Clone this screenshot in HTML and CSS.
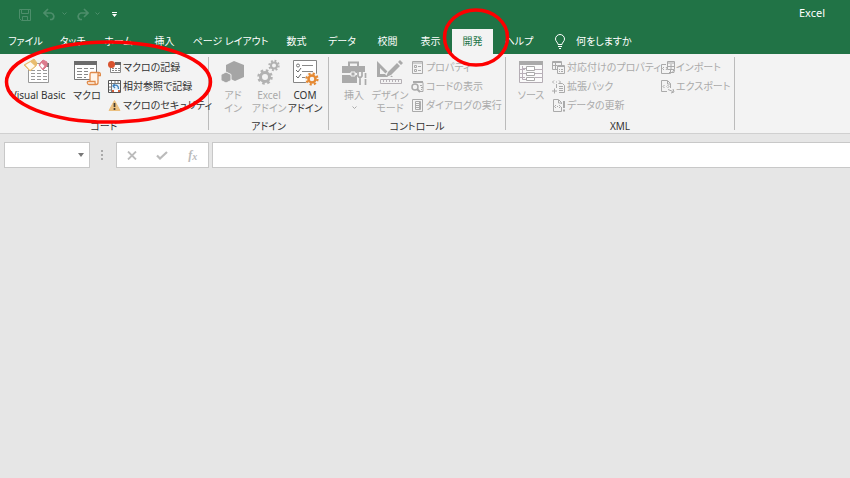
FILE: index.html
```html
<!DOCTYPE html>
<html lang="ja">
<head>
<meta charset="utf-8">
<meta name="viewport" content="width=device-width, initial-scale=1">
<title>Excel</title>
<link rel="stylesheet" href="styles.css">
</head>
<body>
<header class="titlebar">
  <div class="quick">
    <button class="quick-btn faded" aria-label="保存"><svg width="13" height="13" viewBox="0 0 13 13" fill="none" stroke="currentColor"><path d="M1.500 1.500h11v11h-9l-2-2zM3.500 1.500v4h7v-4M4.500 12.500v-4h5v4"/></svg></button>
    <button class="quick-btn faded" aria-label="元に戻す"><svg width="13" height="13" viewBox="0 0 13 13" fill="none" stroke="currentColor" stroke-width="1.700"><path d="M5 1 1 5l4 4M1 5h7a3.500 3.500 0 0 1 1 6.500H7"/></svg></button>
    <button class="quick-btn faded arrow" aria-label="元に戻すの一覧"><svg width="5" height="4" viewBox="0 0 5 4" fill="none" stroke="currentColor"><path d="m.5.5 2 2 2-2"/></svg></button>
    <button class="quick-btn faded" aria-label="やり直し"><svg width="13" height="13" viewBox="0 0 13 13" fill="none" stroke="currentColor" stroke-width="1.700"><path d="m8 1 4 4-4 4m4-4H5a3.500 3.500 0 0 0-1 6.500h2"/></svg></button>
    <button class="quick-btn faded arrow" aria-label="やり直しの一覧"><svg width="5" height="4" viewBox="0 0 5 4" fill="none" stroke="currentColor"><path d="m.5.5 2 2 2-2"/></svg></button>
    <button class="quick-btn custom" aria-label="クイック アクセスのカスタマイズ"><svg width="5" height="5" viewBox="0 0 5 5" fill="currentColor"><path d="M0 0h5v1H0zM0 2h5L2.500 5z"/></svg></button>
  </div>
  <span class="app-name">Excel</span>
</header>

<nav class="tabs">
  <button class="tab">ファイル</button>
  <button class="tab">タッチ</button>
  <button class="tab">ホーム</button>
  <button class="tab">挿入</button>
  <button class="tab">ページ レイアウト</button>
  <button class="tab">数式</button>
  <button class="tab">データ</button>
  <button class="tab">校閲</button>
  <button class="tab">表示</button>
  <button class="tab active">開発</button>
  <button class="tab">ヘルプ</button>
  <button class="tab tell"><svg width="10" height="15" viewBox="0 0 10 15" fill="none" stroke="currentColor"><path d="M3 10.500c0-2-2.500-3-2.500-5.500a4.500 4.500 0 0 1 9 0c0 2.500-2.500 3.500-2.500 5.500zM3 12.500h4M4 14.500h2"/></svg>何をしますか</button>
</nav>

<main class="ribbon">
  <section class="group code">
    <div class="tools">
      <button class="big wide">
        <svg width="28" height="28" viewBox="0 0 28 28"><path d="M4.500 5.500h20v19h-20z" fill="#fff" stroke="#999"/><path d="M17 5h8v4h-8z" fill="#737373"/><path d="M7 12.500h4m2 0h4m2 0h4M7 15.500h4m2 0h4m2 0h4M7 18.500h4m2 0h4m2 0h4M7 21.500h4m2 0h4m2 0h4" stroke="#999"/><path d="m7 3 3-2 3 4-1 3-6 5-6-6z" fill="#e9bd70" stroke="#e9bd70" stroke-linejoin="round"/><path d="m6.500 4 4.500 4-5 4-4.500-5z" fill="#fff9ee"/><path d="m17 4 2-2 4 2v4l-4 4-4-5z" fill="#dc7b8d" stroke="#dc7b8d" stroke-linejoin="round"/><path d="m17.500 5 3 3-2 2.500-2.500-3z" fill="#fff"/></svg>
        <span>Visual Basic</span>
      </button>
      <button class="big">
        <svg width="28" height="28" viewBox="0 0 28 28"><path d="M1.500 3.500h22v18h-22z" fill="#fff" stroke="#777"/><path d="M1 3h23v4H1z" fill="#6b6b6b"/><path d="M4 10.500h5m2 0h4m2 0h4M4 13.500h5m2 0h4M4 16.500h5m2 0h4M4 19.500h5m2 0h2" stroke="#888"/><path d="M18 14.500h8c1 0 1.500 1 1.500 3H25v7c0 2-1 2-2 2h-7c-2 0-2-3-1-3h2v-7q0-2 1-2zM17 23.500h5q0 3 1 3M25 17.500q0-3 1-3" fill="#fff5ea" stroke="#e08a4a" stroke-width="1.300"/></svg>
        <span>マクロ</span>
      </button>
      <div class="list">
        <button class="small"><svg width="14" height="14" viewBox="0 0 14 14"><path d="M2.500 2.500h10v9h-10z" fill="#fff" stroke="#888"/><path d="M7 1h6v3H7z" fill="#666"/><path d="M4 7.500h2m1 0h2m1 0h2M4 9.500h2m1 0h2m1 0h2" stroke="#888"/><circle cx="3.500" cy="3.500" r="3.500" fill="#d9532f"/></svg>マクロの記録</button>
        <button class="small"><svg width="14" height="14" viewBox="0 0 14 14"><path d="M.5.5h12v12H.5z" fill="#fff" stroke="#555"/><path d="M1 3.500h11M3.500 1v11M7 1v2M10 1v2M1 7h2M1 10h2" stroke="#777"/><path d="M4 4h8v6H4z" fill="#eaf3fb"/><path d="M6.500 4 5 6l2 2M5 6c3-1.500 5.500-1 5.500 3" fill="none" stroke="#3c80bd" stroke-width="1.300"/><path d="M4 10h2v2H4zM10 10h2v2h-2z" fill="#d45f3c"/></svg>相対参照で記録</button>
        <button class="small"><svg width="14" height="14" viewBox="0 0 14 14"><path d="M6.500 1.500 12 11.500H1z" fill="#ebc080" stroke="#ebc080" stroke-linejoin="round"/><path d="M6.500 4v4m0 1v2" stroke="#443c30" stroke-width="1.700"/></svg>マクロのセキュリティ</button>
      </div>
    </div>
    <h2 class="caption">コード</h2>
  </section>

  <section class="group addins">
    <div class="tools">
      <button class="big" disabled>
        <svg width="28" height="28" viewBox="0 0 28 28"><path d="m15 3 10 4v12l-9 4-9-4V7z" fill="#a5a5a5"/><path d="m7 14 5 2.500v6L7 25l-5-2.500v-6z" fill="#a5a5a5" stroke="#f3f3f3"/></svg>
        <span>アド<br>イン</span>
      </button>
      <button class="big" disabled>
        <svg width="28" height="28" viewBox="0 0 28 28" fill="none" stroke="#b2b2b2"><circle cx="10" cy="19" r="4.500" stroke-width="3"/><circle cx="10" cy="19" r="6.500" stroke-width="2.500" stroke-dasharray="2.550 2.555"/><circle cx="19" cy="7.500" r="3" stroke-width="2"/><circle cx="19" cy="7.500" r="4.700" stroke-width="2" stroke-dasharray="1.845 1.846"/></svg>
        <span>Excel<br>アドイン</span>
      </button>
      <button class="big">
        <svg width="28" height="28" viewBox="0 0 28 28"><path d="M2.500 2.500h23v22h-23z" fill="#fff" stroke="#858585"/><path d="M11 7.500h11M11 13.500h11M11 19.500h4" stroke="#888"/><path d="m5 12 2 2 3-4m-5 8 2 2 3-4" fill="none" stroke="#666"/><circle cx="7" cy="7.500" r="1.500" fill="none" stroke="#777"/><circle cx="21" cy="21" r="7" fill="#f3f3f3"/><g fill="none" stroke="#e58932"><circle cx="21" cy="21" r="3.500" stroke-width="2.500"/><circle cx="21" cy="21" r="5.500" stroke-width="2.200" stroke-dasharray="2.160 2.160"/></g></svg>
        <span>COM<br>アドイン</span>
      </button>
    </div>
    <h2 class="caption">アドイン</h2>
  </section>

  <section class="group controls">
    <div class="tools">
      <button class="big" disabled>
        <svg width="28" height="28" viewBox="0 0 28 28"><path d="M9 8V4.500h9V8" fill="none" stroke="#aaa" stroke-width="2"/><path d="M2 8h23v7H2zM2 17h15v8H2z" fill="#aaa"/><path d="M11 14h4v4h-4z" fill="#aaa" stroke="#f3f3f3"/><path d="M17 14h11v13H17z" fill="#f3f3f3"/><path d="M18 14v4q2 3 4 0v-4m-2 5v8M25.500 15v5m0 1v6" fill="none" stroke="#aaa" stroke-width="1.700"/></svg>
        <span>挿入<br><svg class="drop" width="5" height="4" viewBox="0 0 5 4" fill="none" stroke="currentColor"><path d="m.5.5 2 2 2-2"/></svg></span>
      </button>
      <button class="big" disabled>
        <svg width="28" height="28" viewBox="0 0 28 28"><path d="M1 3v16h16zM4 10l6 6H4z" fill="#aaa" fill-rule="evenodd"/><path d="m25 4-14 14" stroke="#f3f3f3" stroke-width="6"/><path d="m24 2 3 3-2 2-3-3zM21 5l3 3-9 9-5 2 2-5z" fill="#aaa"/><path d="M4.500 21.500h21v4h-21zM7.500 22v2m3-2v2m3-2v2m3-2v2m3-2v2m3-2v2" fill="none" stroke="#b5b0b5"/></svg>
        <span>デザイン<br>モード</span>
      </button>
      <div class="list">
        <button class="small" disabled><svg width="14" height="14" viewBox="0 0 14 14" fill="none" stroke="#aaa"><path d="M1.500.5h10v12h-10zM1 2h11M7 5.500h3M7 9.500h3"/><path d="M3.500 4.500h2v2h-2zM3.500 8.500h2v2h-2z"/></svg>プロパティ</button>
        <button class="small" disabled><svg width="14" height="14" viewBox="0 0 14 14" fill="none" stroke="#aaa"><path d="M2 2.500h10v9H8M2 1.500h10M9 5.500h2m-1 2h2m-2 2h1"/><circle cx="4" cy="7" r="3" stroke-width="1.500"/><path d="m6 9 3 3" stroke-width="2"/></svg>コードの表示</button>
        <button class="small" disabled><svg width="14" height="14" viewBox="0 0 14 14" fill="none" stroke="#aaa"><path d="M1.500.5h10v12h-10zM4.500 2.500h5v8h-5zM5 4.500h3m-3 2h3m-3 2h3"/><path d="M9 3v7" stroke-width="2"/></svg>ダイアログの実行</button>
      </div>
    </div>
    <h2 class="caption">コントロール</h2>
  </section>

  <section class="group xml">
    <div class="tools">
      <button class="big" disabled>
        <svg width="28" height="28" viewBox="0 0 28 28"><path d="M2.500 3.500h23v21h-23z" fill="#fafafa" stroke="#b4adb4"/><path d="M2 3h24v4H2z" fill="#aaa"/><path d="M3 11.500h5m10 0h8M3 15.500h5m10 0h8M3 19.500h5m10 0h8M5.500 8v13.500h4M5.500 10.500h4m-4 5h4" fill="none" stroke="#b9b0b9"/><path d="M9.500 8.500h8v4h-8zM9.500 14.500h8v3h-8zM9.500 19.500h8v3h-8z" fill="#fff" stroke="#aaa"/></svg>
        <span>ソース</span>
      </button>
      <div class="list">
        <button class="small" disabled><svg width="14" height="14" viewBox="0 0 14 14" fill="none" stroke="#aaa"><path d="M5 8.500H.5v-8h9V4M0 1.500h10M3.500 2v6M1 4.500h4"/><path d="M5.500 4.500h7v8h-7zM5 5.500h8M7 8.500h1m1 0h2m-4 2h1m1 0h2"/></svg>対応付けのプロパティ</button>
        <button class="small" disabled><svg width="14" height="14" viewBox="0 0 14 14" fill="none" stroke="#aaa"><path d="M4.500 8V4m2-.5h4l2 2v7H7M7 6.500h4m-4 2h4m-4 2h4M2.500 8.500v5M0 11h5M2 .5.5 2 2 3.500M7 .5 8.500 2 7 3.500M4 2h1"/></svg>拡張パック</button>
        <button class="small" disabled><svg width="14" height="14" viewBox="0 0 14 14" fill="none" stroke="#aaa"><path d="M9.500 8v4.500h-8V.5h5l3 3V5M6.500 1v3h3M4 6 2.500 7.500 4 9m3-3 1.500 1.500L7 9M5 7.500h1"/><path d="M12 2v7m0 1.500v2" stroke-width="2"/></svg>データの更新</button>
      </div>
      <div class="list second">
        <button class="small" disabled><svg width="14" height="14" viewBox="0 0 14 14" fill="none" stroke="#aaa"><path d="M5 3.500H.5v9h9V9M6.500.5h7v8h-7zM6 2h8M10 3v5M7 5.500h6M3 6 1.500 7.500 3 9m2-3 1 1.500L5 9M8 11.500h5V9m0 0-1.500 1.500M13 9l1 1.500"/></svg>インポート</button>
        <button class="small" disabled><svg width="14" height="14" viewBox="0 0 14 14" fill="none" stroke="#aaa"><path d="M6 11.500H.5V.5h6l3 3V8M6.500 1v3h3M3.500 5 2 6.500 3.500 8m3-3L8 6.500 6.500 8M5 6.500h.5M7 9.500l5 2m0-2.500 1 3-3 1"/></svg>エクスポート</button>
      </div>
    </div>
    <h2 class="caption">XML</h2>
  </section>
</main>

<div class="formula-bar">
  <div class="name-box">
    <input type="text" aria-label="名前ボックス">
    <button aria-label="名前の一覧"><svg width="6" height="4" viewBox="0 0 6 4" fill="currentColor"><path d="M0 0h6L3 4z"/></svg></button>
  </div>
  <svg class="grip" width="3" height="10" viewBox="0 0 3 10" fill="#aaa"><path d="M0 0h2v2H0zM0 4h2v2H0zM0 8h2v2H0z"/></svg>
  <div class="entry">
    <button aria-label="キャンセル" disabled><svg width="10" height="9" viewBox="0 0 10 9" fill="none" stroke="currentColor" stroke-width="1.800"><path d="m1 .5 8 8m0-8-8 8"/></svg></button>
    <button aria-label="入力" disabled><svg width="12" height="9" viewBox="0 0 12 9" fill="none" stroke="currentColor" stroke-width="2.200"><path d="m1 4.500 3 3L11 1"/></svg></button>
    <button class="fx" aria-label="関数の挿入" disabled><i>f<sub>x</sub></i></button>
  </div>
  <input class="formula" type="text" aria-label="数式バー">
</div>

<svg class="marks" width="520" height="130" viewBox="0 0 520 130" fill="none" stroke="#fe0000" aria-hidden="true">
  <ellipse cx="108.500" cy="82" rx="102" ry="40" stroke-width="3.500"/>
  <ellipse cx="476" cy="37.500" rx="31.500" ry="27.500" stroke-width="3.500"/>
</svg>
</body>
</html>
```
FILE: styles.css
```css
* {
  box-sizing: border-box;
}

body {
  margin: 0;
  min-height: 100vh;
  background: #e6e6e6;
  color: #333;
  font: 10px/13px "Noto Sans", "Noto Sans CJK JP", sans-serif;
  font-feature-settings: "palt";
}

button,
input {
  margin: 0;
  padding: 0;
  border: 0;
  background: none;
  color: inherit;
  font: inherit;
  font-feature-settings: inherit;
}

svg {
  display: block;
  flex: none;
}

/* Title bar */
.titlebar {
  display: flex;
  align-items: center;
  justify-content: space-between;
  height: 28px;
  padding: 0 25px 0 18px;
  background: #217346;
  color: #fff;
  font-size: 11px;
}

.app-name {
  line-height: 16px;
  padding-bottom: 2px;
}

.quick {
  display: flex;
  align-items: center;
}

.quick-btn {
  margin-right: 12px;
}

.faded {
  color: #4d8e6b;
}

.quick-btn.arrow {
  margin-right: 9px;
  margin-left: -6px;
}

.custom {
  margin-left: 3px;
}

/* Ribbon tabs */
.tabs {
  display: grid;
  grid-template-columns: 51px 43px 49px 43px 89px 43px 48px 43px 43px 41px 52px auto;
  justify-content: start;
  height: 26px;
  padding-top: 1px;
  background: #217346;
  color: #fff;
}

.tab {
  white-space: nowrap;
}

.tab.active {
  background: #f3f3f3;
  color: #217346;
}

.tell {
  display: flex;
  align-items: center;
  gap: 11px;
  padding-left: 10px;
}

/* Ribbon groups */
.ribbon {
  display: flex;
  padding: 3px 0;
  border-bottom: 1px solid #d0d0d0;
  background: #f3f3f3;
}

.group {
  display: flex;
  flex-direction: column;
  height: 73px;
  border-right: 1px solid #bbb;
}

.code {
  width: 209px;
}

.addins {
  width: 120px;
}

.controls {
  width: 177px;
}

.xml {
  width: 229px;
}

.tools {
  display: flex;
  flex: 1;
  align-items: flex-start;
  padding: 1px 0 0 7px;
}

.big {
  display: flex;
  flex: none;
  flex-direction: column;
  align-items: center;
  gap: 3px;
  width: 36px;
  white-space: nowrap;
}

.wide {
  width: 62px;
}

.addins .tools {
  padding-left: 6px;
}

.drop {
  margin: 4px auto;
}

.list {
  display: flex;
  flex-direction: column;
  margin-left: 3px;
}

.list.second {
  margin-left: 0;
}

.small {
  display: flex;
  align-items: center;
  gap: 1px;
  height: 19px;
  white-space: nowrap;
}

.big:disabled,
.small:disabled {
  color: #aaa;
}

.caption {
  margin: 0;
  font-size: 10px;
  font-weight: 400;
  line-height: 8px;
  text-align: center;
}

/* Formula bar */
.formula-bar {
  display: flex;
  align-items: center;
  height: 26px;
  margin: 8px 0 0 4px;
}

.name-box,
.entry,
.formula {
  height: 26px;
  border: 1px solid #c8c8c8;
  background: #fff;
}

.name-box {
  display: flex;
  width: 86px;
}

.name-box input {
  flex: 1;
  min-width: 0;
  padding-left: 4px;
}

.name-box button {
  display: grid;
  place-items: center;
  width: 16px;
  color: #777;
}

.grip {
  margin: 0 12px 0 11px;
}

.entry {
  display: grid;
  grid-template-columns: repeat(3, 1fr);
  width: 93px;
  margin-right: 3px;
  color: #bbb;
}

.entry button {
  display: flex;
  align-items: center;
  justify-content: center;
}

.entry .fx {
  font: bold 12px/12px "Liberation Serif", serif;
}

.fx sub {
  font-size: 10px;
  line-height: 1;
  vertical-align: -1px;
}

.formula {
  flex: 1;
  min-width: 0;
  border-right: 0;
  padding-left: 4px;
}

/* Highlight rings laid over the ribbon */
.marks {
  position: absolute;
  top: 0;
  left: 0;
  pointer-events: none;
}
```
